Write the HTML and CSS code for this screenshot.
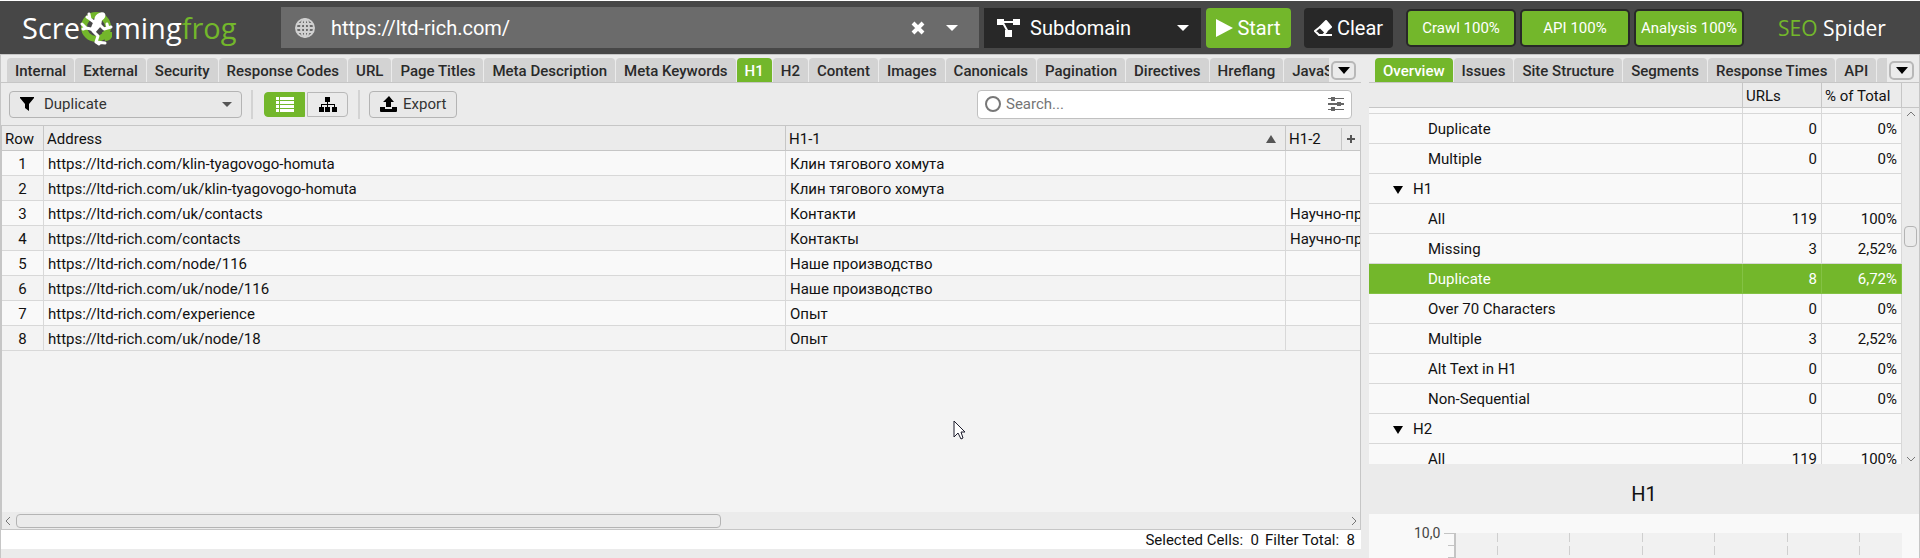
FILE: index.html
```html
<!DOCTYPE html>
<html lang="en">
<head>
    <meta charset="UTF-8">
    <meta name="viewport" content="width=device-width, initial-scale=1.0">
    <title>Screaming Frog SEO Spider</title>
    <link rel="stylesheet" href="styles.css">
</head>
<body>
    <header class="topbar">
        <div class="logo">
            <span>Scre</span>
            <svg class="frog" width="34" height="36" viewBox="0 0 34 36">
                <circle cx="16" cy="17" r="12" fill="none" stroke="#73b72b" stroke-width="6"/>
                <path d="M22 22h10v5q-2 4-7 4z" fill="#73b72b"/>
                <ellipse cx="20" cy="7" rx="6" ry="4" transform="rotate(-35 20 7)" fill="#fff"/>
                <path d="M15 8l7 2-1 6-6 7-5-3 2-5z" fill="#fff"/>
                <g fill="none" stroke="#fff" stroke-width="3" stroke-linecap="round" stroke-linejoin="round">
                    <path d="M14 12l-4-3-1-5M7 7l3 2"/>
                    <path d="M20 15l4 4 7-2M27 14l1 4"/>
                    <path d="M11 19l-5-1-4-4M3 19l3-1"/>
                    <path d="M13 21l5 5-2 6 9 1M19 34l-3-2"/>
                </g>
            </svg>
            <span>ming</span><span class="green">frog</span>
        </div>

        <div class="url-box">
            <svg width="20" height="20" viewBox="0 0 20 20" fill="none" stroke="#d0d0d0" stroke-width="2">
                <circle cx="10" cy="10" r="9"/>
                <ellipse cx="10" cy="10" rx="4" ry="9"/>
                <path d="M10 1v18M1 10h18M2 6h16M2 14h16"/>
            </svg>
            <input type="text" value="https://ltd-rich.com/" aria-label="URL to spider">
            <button class="plain" aria-label="Clear URL">
                <svg width="14" height="14" viewBox="0 0 14 14" stroke="#fff" stroke-width="4"><path d="M2 2l10 10M12 2L2 12"/></svg>
            </button>
            <button class="plain" aria-label="URL history">
                <svg width="12" height="6" viewBox="0 0 12 6" fill="#fff"><path d="M0 0h12L6 6z"/></svg>
            </button>
        </div>

        <div class="mode-box">
            <svg width="24" height="19" viewBox="0 0 24 19" fill="#fff">
                <path d="M0 1h7v6H0zM16 1h7v6h-7zM8 12h7v7H8z"/>
                <path d="M6 4h11M6 5l5 9" stroke="#fff" stroke-width="2"/>
            </svg>
            <select aria-label="Crawl mode">
                <option>Subdomain</option>
            </select>
            <svg width="12" height="6" viewBox="0 0 12 6" fill="#fff"><path d="M0 0h12L6 6z"/></svg>
        </div>

        <button class="big-btn start">
            <svg width="17" height="18" viewBox="0 0 17 18" fill="#fff"><path d="M0 0l17 9L0 18z"/></svg>
            Start
        </button>
        <button class="big-btn clear">
            <svg width="19" height="16" viewBox="0 0 19 16" fill="none" stroke="#fff">
                <path d="M6 7l6-6 5 6-6 5z" fill="#fff" stroke-width="2" stroke-linejoin="round"/>
                <path d="M6 7l-5 4 4 4h4l4-4M6 15h12" stroke-width="2"/>
            </svg>
            Clear
        </button>

        <div class="progress">
            <div class="progress-item">Crawl 100%</div>
            <div class="progress-item">API 100%</div>
            <div class="progress-item">Analysis 100%</div>
        </div>

        <div class="product"><span class="green">SEO</span> Spider</div>
    </header>

    <main class="workspace">
        <section class="left">
            <div class="tabbar">
                <nav class="tabs">
                    <button class="tab">Internal</button>
                    <button class="tab">External</button>
                    <button class="tab">Security</button>
                    <button class="tab">Response Codes</button>
                    <button class="tab">URL</button>
                    <button class="tab">Page Titles</button>
                    <button class="tab">Meta Description</button>
                    <button class="tab">Meta Keywords</button>
                    <button class="tab active">H1</button>
                    <button class="tab">H2</button>
                    <button class="tab">Content</button>
                    <button class="tab">Images</button>
                    <button class="tab">Canonicals</button>
                    <button class="tab">Pagination</button>
                    <button class="tab">Directives</button>
                    <button class="tab">Hreflang</button>
                    <button class="tab">JavaScript</button>
                </nav>
                <button class="more" aria-label="More tabs">
                    <svg width="12" height="7" viewBox="0 0 12 7"><path d="M0 0h12L6 7z"/></svg>
                </button>
            </div>

            <div class="toolbar">
                <div class="filter">
                    <svg width="14" height="14" viewBox="0 0 14 14"><path d="M0 0h14v1L9 7v7l-4-3V7L0 1z"/></svg>
                    <select aria-label="Filter">
                        <option>Duplicate</option>
                    </select>
                    <svg width="10" height="5" viewBox="0 0 10 5" fill="#555"><path d="M0 0h10L5 5z"/></svg>
                </div>
                <span class="divider"></span>
                <div class="views">
                    <button class="view on" aria-label="List view">
                        <svg width="18" height="15" viewBox="0 0 18 15" fill="#fff">
                            <path d="M0 0h3v3H0zM0 4h3v3H0zM0 8h3v3H0zM0 12h3v3H0zM4 0h14v3H4zM4 4h14v3H4zM4 8h14v3H4zM4 12h14v3H4z"/>
                        </svg>
                    </button>
                    <button class="view" aria-label="Tree view">
                        <svg width="18" height="15" viewBox="0 0 18 15">
                            <path d="M6 0h5v5H6zM0 10h5v5H0zM6 10h5v5H6zM13 10h5v5h-5zM8 5h1v6H8zM2 7h14v1H2zM2 7h1v4H2zM15 7h1v4h-1z"/>
                        </svg>
                    </button>
                </div>
                <span class="divider"></span>
                <button class="export">
                    <svg width="17" height="16" viewBox="0 0 17 16">
                        <path d="M9 0l5 6h-3v5H6V6H3z"/>
                        <path d="M0 11h5v2h7v-2h5v4q0 1-1 1H1q-1 0-1-1z"/>
                    </svg>
                    Export
                </button>
                <div class="search">
                    <svg width="16" height="16" viewBox="0 0 16 16" fill="none" stroke="#777" stroke-width="2"><circle cx="8" cy="8" r="7"/></svg>
                    <input type="text" placeholder="Search..." aria-label="Search">
                    <svg width="16" height="14" viewBox="0 0 16 14" fill="#666">
                        <path d="M0 1h16v1H0zM0 6h16v2H0zM0 12h16v1H0zM3 0h4v4H3zM9 5h4v4H9zM3 10h4v4H3z"/>
                    </svg>
                </div>
            </div>

            <div class="grid">
                <table class="results">
                    <colgroup>
                        <col class="c-row"><col><col class="c-h1"><col class="c-h2">
                    </colgroup>
                    <thead>
                        <tr>
                            <th>Row</th>
                            <th>Address</th>
                            <th><div class="head">H1-1 <svg width="10" height="8" viewBox="0 0 10 8" fill="#555"><path d="M0 8h10L5 0z"/></svg></div></th>
                            <th><div class="head">H1-2 <button class="add" aria-label="Add column"><svg width="8" height="8" viewBox="0 0 8 8" fill="#555"><path d="M3 0h2v3h3v2H5v3H3V5H0V3h3z"/></svg></button></div></th>
                        </tr>
                    </thead>
                    <tbody>
                        <tr><td>1</td><td>https://ltd-rich.com/klin-tyagovogo-homuta</td><td>Клин тягового хомута</td><td></td></tr>
                        <tr><td>2</td><td>https://ltd-rich.com/uk/klin-tyagovogo-homuta</td><td>Клин тягового хомута</td><td></td></tr>
                        <tr><td>3</td><td>https://ltd-rich.com/uk/contacts</td><td>Контакти</td><td>Научно-производственное</td></tr>
                        <tr><td>4</td><td>https://ltd-rich.com/contacts</td><td>Контакты</td><td>Научно-производственное</td></tr>
                        <tr><td>5</td><td>https://ltd-rich.com/node/116</td><td>Наше производство</td><td></td></tr>
                        <tr><td>6</td><td>https://ltd-rich.com/uk/node/116</td><td>Наше производство</td><td></td></tr>
                        <tr><td>7</td><td>https://ltd-rich.com/experience</td><td>Опыт</td><td></td></tr>
                        <tr><td>8</td><td>https://ltd-rich.com/uk/node/18</td><td>Опыт</td><td></td></tr>
                    </tbody>
                </table>
                <div class="hscroll">
                    <svg width="6" height="10" viewBox="0 0 6 10"><path d="M5 1L1 5l4 4"/></svg>
                    <div class="track"><div class="thumb"></div></div>
                    <svg width="6" height="10" viewBox="0 0 6 10"><path d="M1 1l4 4-4 4"/></svg>
                </div>
            </div>
            <div class="status"><span>Selected Cells:&nbsp; 0</span><span>Filter Total:&nbsp; 8</span></div>
        </section>

        <section class="right">
            <div class="tabbar">
                <nav class="tabs">
                    <button class="tab active">Overview</button>
                    <button class="tab">Issues</button>
                    <button class="tab">Site Structure</button>
                    <button class="tab">Segments</button>
                    <button class="tab">Response Times</button>
                    <button class="tab">API</button>
                    <button class="tab" aria-label="Spelling"></button>
                </nav>
                <button class="more" aria-label="More tabs">
                    <svg width="12" height="7" viewBox="0 0 12 7"><path d="M0 0h12L6 7z"/></svg>
                </button>
            </div>

            <div class="tree">
                <table class="overview">
                    <colgroup>
                        <col><col class="c-num"><col class="c-pct"><col class="c-bar">
                    </colgroup>
                    <thead>
                        <tr><th></th><th>URLs</th><th>% of Total</th><th></th></tr>
                    </thead>
                </table>
                <div class="tree-body">
                    <table class="overview">
                        <colgroup>
                            <col><col class="c-num"><col class="c-pct">
                        </colgroup>
                        <tbody>
                            <tr class="cut"><td></td><td></td><td></td></tr>
                            <tr><td>Duplicate</td><td>0</td><td>0%</td></tr>
                            <tr><td>Multiple</td><td>0</td><td>0%</td></tr>
                            <tr class="group"><td><svg width="10" height="8" viewBox="0 0 10 8"><path d="M0 0h10L5 8z"/></svg>H1</td><td></td><td></td></tr>
                            <tr><td>All</td><td>119</td><td>100%</td></tr>
                            <tr><td>Missing</td><td>3</td><td>2,52%</td></tr>
                            <tr class="selected"><td>Duplicate</td><td>8</td><td>6,72%</td></tr>
                            <tr><td>Over 70 Characters</td><td>0</td><td>0%</td></tr>
                            <tr><td>Multiple</td><td>3</td><td>2,52%</td></tr>
                            <tr><td>Alt Text in H1</td><td>0</td><td>0%</td></tr>
                            <tr><td>Non-Sequential</td><td>0</td><td>0%</td></tr>
                            <tr class="group"><td><svg width="10" height="8" viewBox="0 0 10 8"><path d="M0 0h10L5 8z"/></svg>H2</td><td></td><td></td></tr>
                            <tr><td>All</td><td>119</td><td>100%</td></tr>
                        </tbody>
                    </table>
                    <div class="vscroll">
                        <svg width="10" height="6" viewBox="0 0 10 6"><path d="M1 5l4-4 4 4"/></svg>
                        <div class="track"><div class="thumb"></div></div>
                        <svg width="10" height="6" viewBox="0 0 10 6"><path d="M1 1l4 4 4-4"/></svg>
                    </div>
                </div>
            </div>

            <div class="chart">
                <h2>H1</h2>
                <div class="plot-area">
                    <span class="axis-label">10,0</span>
                    <svg class="ticks" width="12" height="25" viewBox="0 0 12 25" fill="#c4c4c4">
                        <path d="M0 0h12v1H0zM4 12h8v1H4zM4 24h8v1H4zM10 0h2v25h-2z"/>
                    </svg>
                    <div class="plot">
                        <span></span><span></span><span></span><span></span><span></span><span></span>
                    </div>
                </div>
            </div>
        </section>

        <svg class="pointer" width="13" height="20" viewBox="0 0 13 20">
            <path d="M1 1v16l4-4 3 6 2-1-2-6h4z" fill="#fff" stroke="#1a1a2a"/>
        </svg>
    </main>
</body>
</html>
```

FILE: styles.css
```css
* {
    box-sizing: border-box;
}
body {
    margin: 0;
    height: 100vh;
    display: flex;
    flex-direction: column;
    overflow: hidden;
    background-color: #ebebeb;
    color: #111;
    font-family: Roboto, sans-serif;
    font-size: 15px;
}
svg {
    flex: none;
}
button, input, select {
    font: inherit;
    color: inherit;
    border: none;
    background: none;
    padding: 0;
    margin: 0;
}
button {
    cursor: pointer;
}
select {
    appearance: none;
    flex: 1;
    min-width: 0;
}
input {
    flex: 1;
    min-width: 0;
    outline: none;
}
.green {
    color: #73b72b;
}

/* top bar */
.topbar {
    display: flex;
    align-items: center;
    height: 54px;
    flex: none;
    background-color: #474747;
    border-top: 1px solid #fff;
    color: #fff;
    font-size: 20px;
}
.logo {
    display: flex;
    align-items: center;
    width: 281px;
    padding-left: 22px;
    font-family: "Open Sans", sans-serif;
    font-size: 29px;
    font-weight: 500;
    line-height: 40px;
}
.url-box {
    display: flex;
    align-items: center;
    flex: 1;
    height: 41px;
    padding: 0 21px 0 14px;
    background-color: #6b6b6b;
}
.url-box input {
    margin-left: 16px;
}
.plain {
    display: flex;
    margin-left: 21px;
}
.mode-box {
    display: flex;
    align-items: center;
    width: 217px;
    height: 40px;
    margin: 0 5px;
    padding: 0 12px 0 13px;
    background-color: #282828;
}
.mode-box select {
    margin-left: 9px;
}
.big-btn {
    display: flex;
    align-items: center;
    justify-content: center;
    height: 40px;
    border-radius: 4px;
}
.start {
    width: 85px;
    gap: 4px;
    background-color: #73b72b;
}
.clear {
    width: 89px;
    gap: 4px;
    margin-left: 13px;
    background-color: #282828;
}
.progress {
    display: flex;
    gap: 4px;
    margin-left: 13px;
}
.progress-item {
    width: 110px;
    height: 38px;
    border: 2px solid #282828;
    border-radius: 5px;
    background-color: #73b72b;
    font-size: 15px;
    line-height: 34px;
    text-align: center;
}
.product {
    width: 176px;
    padding-left: 34px;
    font-family: "Open Sans", sans-serif;
    font-size: 21px;
}

/* panels */
.workspace {
    display: flex;
    flex: 1;
    min-height: 0;
    gap: 8px;
    position: relative;
    border: 1px solid #c6c6c6;
    border-bottom: none;
}
.left {
    display: flex;
    flex-direction: column;
    flex: 1;
    min-width: 0;
    padding-bottom: 9px;
}
.right {
    display: flex;
    flex-direction: column;
    width: 550px;
}
.tabbar {
    display: flex;
    align-items: center;
    flex: none;
    height: 28px;
    padding: 3px 5px 0 6px;
    border-bottom: 1px solid #c6c6c6;
}
.tabs {
    display: flex;
    flex: 1;
    min-width: 0;
    gap: 1px;
    overflow: hidden;
}
.tab {
    flex: none;
    height: 24px;
    padding: 2px 8px 0;
    border-radius: 4px 4px 0 0;
    background-color: #d3d3d3;
    color: #2a2a2a;
    font-weight: 500;
}
.tab.active {
    background-color: #73b72b;
    color: #fff;
}
.more {
    display: flex;
    align-items: center;
    justify-content: center;
    width: 25px;
    height: 19px;
    margin-left: 2px;
    border: 2px solid #b8b8b8;
    border-radius: 5px;
}

/* toolbar */
.toolbar {
    display: flex;
    align-items: center;
    flex: none;
    height: 42px;
    padding: 0 9px 0 8px;
    color: #333;
}
.filter {
    display: flex;
    align-items: center;
    width: 233px;
    height: 27px;
    padding: 0 9px 0 10px;
    border: 1px solid #b4b4b4;
    border-radius: 4px;
    background-color: #e8e8e8;
}
.filter select {
    margin-left: 10px;
}
.divider {
    width: 2px;
    height: 29px;
    margin: 0 9px;
    background-color: #d3d3d3;
}
.views {
    display: flex;
    gap: 2px;
    margin: 0 1px 0 2px;
}
.view {
    display: flex;
    align-items: center;
    justify-content: center;
    width: 41px;
    height: 25px;
    border: 1px solid #b8b8b8;
    border-radius: 0 4px 4px 0;
}
.view.on {
    border-color: #73b72b;
    border-radius: 4px 0 0 4px;
    background-color: #73b72b;
}
.export {
    display: flex;
    align-items: center;
    gap: 6px;
    height: 27px;
    padding: 0 10px;
    border: 1px solid #b4b4b4;
    border-radius: 4px;
    background-color: #e8e8e8;
}
.search {
    display: flex;
    align-items: center;
    width: 375px;
    height: 29px;
    margin-left: auto;
    padding: 0 7px;
    border: 1px solid #c0c0c0;
    border-radius: 4px;
    background-color: #fff;
}
.search input {
    margin-left: 5px;
}
.search input::placeholder {
    color: #757575;
}

/* tables */
table {
    width: 100%;
    table-layout: fixed;
    border-collapse: separate;
    border-spacing: 0;
}
th {
    height: 25px;
    padding: 2px 0 0 3px;
    border-right: 1px solid #c6c6c6;
    border-bottom: 1px solid #c6c6c6;
    background-color: #ebebeb;
    font-weight: 400;
    text-align: left;
}
td {
    height: 25px;
    padding: 2px 4px 0;
    border-right: 1px solid #d8d8d8;
    border-bottom: 1px solid #d8d8d8;
    background-color: #f9f9f9;
    overflow: hidden;
    white-space: nowrap;
}
.grid {
    display: flex;
    flex-direction: column;
    flex: 1;
    min-height: 0;
    border: 1px solid #c6c6c6;
    background-color: #f3f3f3;
}
.c-row {
    width: 42px;
}
.c-h1 {
    width: 500px;
}
.c-h2 {
    width: 74px;
}
.results td:first-child {
    text-align: center;
}
.results tr > :last-child {
    border-right: none;
}
.results tbody tr:nth-child(even) td {
    background-color: #f3f3f3;
}
.head {
    display: flex;
    align-items: center;
    justify-content: space-between;
    height: 22px;
    padding-right: 9px;
}
.results th:last-child .head {
    padding-right: 0;
}
.add {
    display: flex;
    align-items: center;
    justify-content: center;
    width: 19px;
    height: 22px;
    border-left: 1px solid #c6c6c6;
}
.hscroll {
    display: flex;
    align-items: center;
    gap: 5px;
    height: 17px;
    margin-top: auto;
    padding: 0 3px;
    background-color: #ebebeb;
}
.hscroll svg, .vscroll svg {
    fill: none;
    stroke: #777;
}
.track {
    flex: 1;
}
.thumb {
    border: 1px solid #b4b4b4;
    border-radius: 4px;
    background-color: #ebebeb;
}
.hscroll .thumb {
    width: 53%;
    height: 14px;
}
.status {
    display: flex;
    justify-content: flex-end;
    gap: 6px;
    height: 19px;
    padding-right: 6px;
    background-color: #fff;
    line-height: 20px;
}

/* overview */
.tree {
    display: flex;
    flex-direction: column;
    flex: 1;
    min-height: 0;
}
.c-num {
    width: 79px;
}
.c-pct {
    width: 80px;
}
.c-bar {
    width: 17px;
}
.overview th:last-child {
    border-right: none;
}
.tree-body {
    display: flex;
    align-items: flex-start;
    flex: 1;
    min-height: 0;
    overflow: hidden;
}
.tree-body td {
    height: 30px;
    padding-top: 0;
    text-align: right;
}
.tree-body td:first-child {
    padding-left: 59px;
    text-align: left;
}
.tree-body .group td:first-child {
    padding-left: 24px;
}
.group svg {
    margin-right: 10px;
}
.tree-body .cut td {
    height: 6px;
}
.tree-body .selected td {
    border-color: #84c244;
    background-color: #73b72b;
    color: #fff;
}
.vscroll {
    display: flex;
    flex-direction: column;
    align-items: center;
    flex: none;
    width: 17px;
    height: 100%;
    padding: 3px 0 2px;
}
.vscroll .thumb {
    width: 13px;
    height: 21px;
}
.vscroll .track {
    padding-top: 109px;
}

/* chart */
.chart h2 {
    height: 50px;
    margin: 0;
    padding-top: 5px;
    font-size: 20px;
    font-weight: 400;
    line-height: 50px;
    text-align: center;
}
.plot-area {
    display: flex;
    height: 44px;
    padding: 19px 17px 0 45px;
    background-color: #f9f9f9;
}
.axis-label {
    width: 30px;
    margin-top: -8px;
    font-size: 14px;
    line-height: 16px;
    color: #444;
}
.plot {
    display: flex;
    justify-content: space-between;
    flex: 1;
    padding: 0 42px 0 41px;
    background-color: #f1f1f1;
}
.plot span {
    width: 1px;
    background: repeating-linear-gradient(#cfcfcf 0 9px, transparent 9px 13px);
}
.pointer {
    position: absolute;
    left: 952px;
    top: 365px;
}
```
